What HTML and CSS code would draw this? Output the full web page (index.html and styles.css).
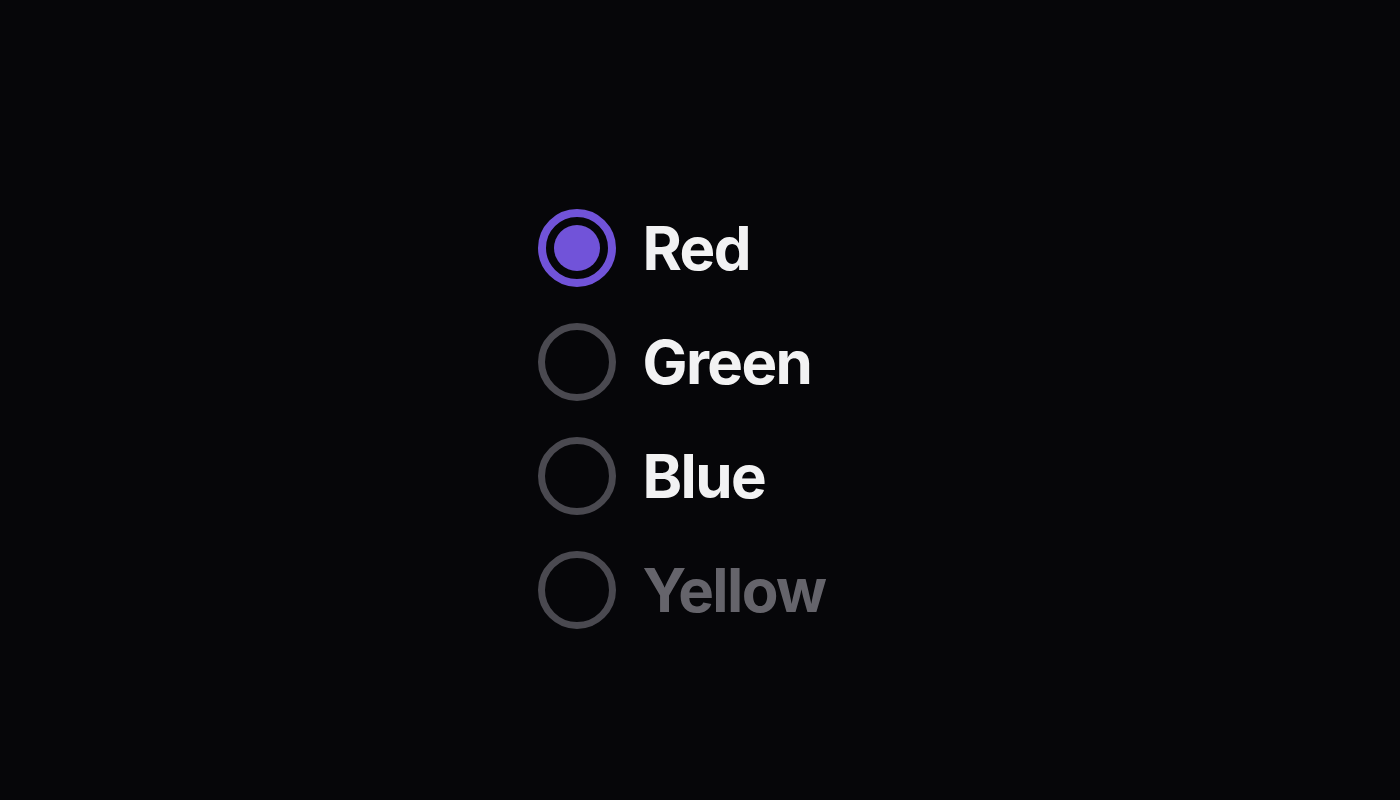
FILE: index.html
```html
<!DOCTYPE html>
<html lang="en">
<head>
<meta charset="utf-8">
<title>Radio group</title>
<link rel="stylesheet" href="styles.css">
</head>
<body>
<main class="stage">
  <div class="radio-group" role="radiogroup">
    <label class="radio-item">
      <span class="radio checked"><span class="dot"></span></span>
      <span class="label">Red</span>
    </label>
    <label class="radio-item">
      <span class="radio"></span>
      <span class="label">Green</span>
    </label>
    <label class="radio-item">
      <span class="radio"></span>
      <span class="label">Blue</span>
    </label>
    <label class="radio-item disabled">
      <span class="radio"></span>
      <span class="label">Yellow</span>
    </label>
  </div>
</main>
</body>
</html>
```

FILE: styles.css
```css
html, body {
  margin: 0;
  padding: 0;
  height: 100%;
  background: #060609;
}
.stage {
  height: 800px;
  display: flex;
  align-items: center;
  justify-content: center;
  padding-right: 37px;
  padding-top: 38px;
  box-sizing: border-box;
  font-family: Inter, "Noto Sans", sans-serif;
}
.radio-group {
  display: flex;
  flex-direction: column;
  gap: 36px;
}
.radio-item {
  display: flex;
  align-items: center;
  gap: 27px;
  height: 78px;
}
.radio {
  width: 78px;
  height: 78px;
  box-sizing: border-box;
  border-radius: 50%;
  border: 7px solid #4a4950;
  display: flex;
  align-items: center;
  justify-content: center;
}
.radio.checked {
  border: 8px solid #7153d9;
}
.dot {
  width: 46px;
  height: 46px;
  border-radius: 50%;
  background: #7153d9;
}
.label {
  font-size: 60px;
  font-weight: 700;
  letter-spacing: -1.6px;
  color: #f2f2f3;
  line-height: 1;
}
.disabled .label {
  color: #65646b;
}
```
